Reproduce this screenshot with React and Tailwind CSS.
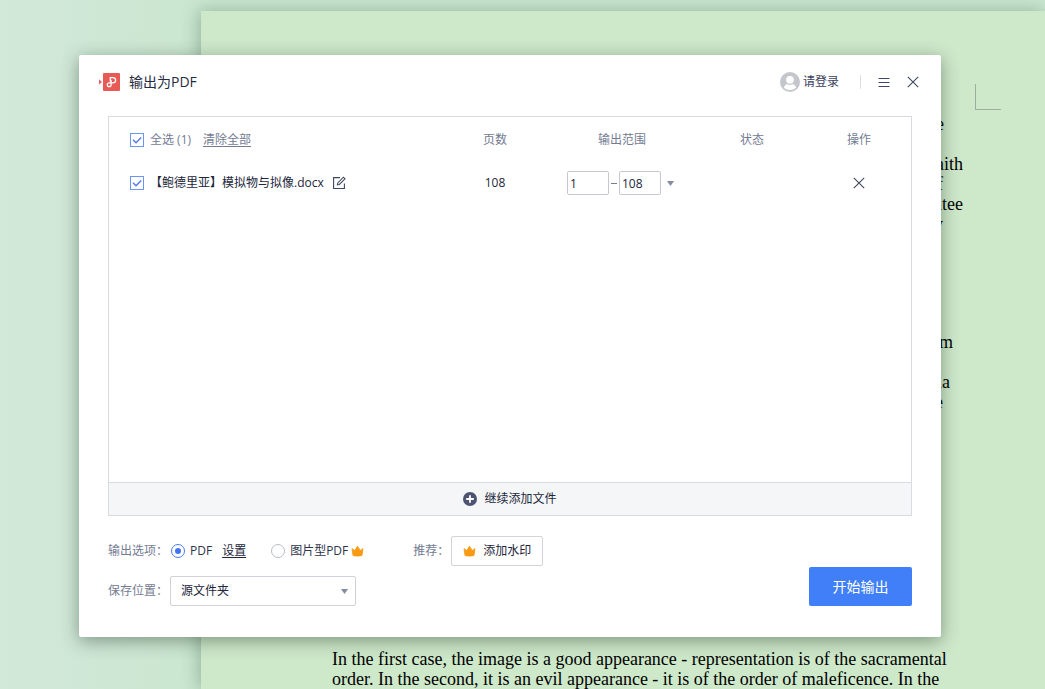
import { useState } from 'react';

const CROWN = 'M1 3.6 3.7 5.6 6.5 1.2 9.3 5.6 12 3.6 11 10.6Q6.5 11.6 2 10.6Z';

function CrownIcon() {
    return (
        <svg className="h-3 w-[13px] shrink-0" viewBox="0 0 13 12" aria-hidden="true">
            <path d={CROWN} fill="#fa9a14" stroke="#fa9a14" strokeWidth="0.8" strokeLinejoin="round" />
        </svg>
    );
}

function CloseIcon() {
    return (
        <svg className="size-3" viewBox="0 0 12 12" fill="none" stroke="#3f4760" strokeWidth="1.1" aria-hidden="true">
            <path d="M0.8 0.8 11.2 11.2M11.2 0.8 0.8 11.2" />
        </svg>
    );
}

function Caret() {
    return (
        <svg className="pointer-events-none h-[5px] w-[7px]" viewBox="0 0 7 5" aria-hidden="true">
            <path d="M0 0H7L3.5 5Z" fill="#858ba0" />
        </svg>
    );
}

function Checkbox({ id, label, checked, onChange }) {
    return (
        <span className="grid size-[14px] shrink-0 place-items-center">
            <input
                id={id}
                type="checkbox"
                aria-label={label}
                checked={checked}
                onChange={onChange}
                className="peer col-start-1 row-start-1 size-[14px] appearance-none border border-[#6d93f5] bg-white"
            />
            <svg
                className="pointer-events-none invisible col-start-1 row-start-1 size-[10px] peer-checked:visible"
                viewBox="0 0 10 10"
                fill="none"
                stroke="#5577ea"
                strokeWidth="1.4"
                aria-hidden="true"
            >
                <path d="M1 4.8 4 7.8 9.2 2.4" />
            </svg>
        </span>
    );
}

function Radio({ id, checked, onChange }) {
    return (
        <input
            id={id}
            type="radio"
            name="format"
            checked={checked}
            onChange={onChange}
            className="size-[14px] shrink-0 appearance-none rounded-full border border-[#b9bdc6] bg-white bg-clip-content p-[3px] checked:border-[#4c7cf0] checked:bg-[#4274ee]"
        />
    );
}

function DocumentPage() {
    return (
        <div className="ml-[201px] mt-[11px] grow bg-[#cee8ca] pl-[131px] pt-[73px] font-['Liberation_Serif',serif] text-lg/5 text-black shadow-[-2px_0_16px_rgba(50,90,60,0.35)]">
            <div className="ml-[643px] size-[26px] border-b border-l border-[#9bb09b]" />
            <div className="mt-1 w-[631px] text-right">
                <p className="pr-[19px]">e</p>
                <p className="h-5"></p>
                <p>faith</p>
                <p className="pr-[20px]">f</p>
                <p>guarantee</p>
                <p className="pr-[20px]">y</p>
            </div>
            <div className="mt-[98px] w-[631px] text-right">
                <p className="pr-[10px]">m</p>
                <p className="h-5"></p>
                <p className="pr-[13px]">ia</p>
                <p className="pr-[20px]">e</p>
            </div>
            <div className="mt-[237px] whitespace-nowrap">
                <p>In the first case, the image is a good appearance - representation is of the sacramental</p>
                <p>order. In the second, it is an evil appearance - it is of the order of maleficence. In the</p>
            </div>
        </div>
    );
}

function TitleBar() {
    return (
        <header className="mb-[7px] flex h-[54px] items-center pl-5 pr-[22px]">
            <svg className="h-[18px] w-[21px]" viewBox="0 0 21 18" aria-hidden="true">
                <path d="M0 6.2 3 9 0 11.8Z" fill="#e8636a" />
                <rect x="4" width="17" height="18" rx="1" fill="#e75a55" />
                <g fill="none" stroke="#fff" strokeWidth="1.3" strokeLinecap="round">
                    <path d="M11.3 8V4.6H14A2.6 2.6 0 0 1 14 9.8H10.2A1.9 1.9 0 1 0 12.1 11.7V7.4" />
                </g>
            </svg>
            <h1 className="ml-[9px] text-sm text-[#262b40]">输出为PDF</h1>
            <button type="button" className="ml-auto flex items-center gap-[3px] text-[#3a415c]">
                <svg className="size-5" viewBox="0 0 20 20" aria-hidden="true">
                    <circle cx="10" cy="10" r="10" fill="#c3c6cb" />
                    <circle cx="10" cy="7.8" r="3.9" fill="#fff" />
                    <path d="M3.8 15.8Q4.6 12.6 7.6 12.2Q10 13.6 12.4 12.2Q15.4 12.6 16.2 15.8Q13.6 18 10 18Q6.4 18 3.8 15.8Z" fill="#fff" />
                </svg>
                请登录
            </button>
            <span className="ml-[21px] h-[14px] w-px bg-[#dcdfe4]" />
            <button type="button" aria-label="菜单" className="ml-[17px]">
                <svg className="size-3" viewBox="0 0 12 12" stroke="#3f4760" strokeWidth="1" aria-hidden="true">
                    <path d="M0.5 2.5H11.5M0.5 6.5H11.5M0.5 10.5H11.5" />
                </svg>
            </button>
            <button type="button" aria-label="关闭" className="ml-[17px]">
                <CloseIcon />
            </button>
        </header>
    );
}

function FileTable({ checked, setChecked }) {
    const toggle = () => setChecked(!checked);

    return (
        <div className="mx-[29px] border border-[#d9dbe1]">
            <div className="min-h-[365px]">
                <table className="w-full table-fixed">
                    <thead className="text-[#747b92]">
                        <tr className="h-[45px]">
                            <th className="pl-[21px] font-normal">
                                <div className="flex items-center gap-[6px]">
                                    <Checkbox id="all" checked={checked} onChange={toggle} />
                                    <label htmlFor="all">全选 (1)</label>
                                    <button type="button" className="ml-[6px] underline underline-offset-2">清除全部</button>
                                </div>
                            </th>
                            <th className="w-[130px] font-normal">页数</th>
                            <th className="w-[124px] font-normal">输出范围</th>
                            <th className="w-[136px] font-normal">状态</th>
                            <th className="w-[91px] pr-[13px] font-normal">操作</th>
                        </tr>
                    </thead>
                    <tbody className="text-[#22263a]">
                        <tr className="h-[42px]">
                            <td className="pl-[21px]">
                                <div className="flex items-center gap-[6px]">
                                    <Checkbox id="file" checked={checked} onChange={toggle} />
                                    <label htmlFor="file" className="whitespace-nowrap">【鲍德里亚】模拟物与拟像.docx</label>
                                    <button type="button" aria-label="重命名" className="ml-[2px]">
                                        <svg className="size-[14px]" viewBox="0 0 14 14" fill="none" stroke="#3f4760" strokeWidth="1.1" aria-hidden="true">
                                            <path d="M8 1.6H1.6V12.5H12.4V7.4" />
                                            <path d="M5.4 8.9 5.8 6.9 11.4 1.2 13 2.8 7.4 8.5Z" />
                                        </svg>
                                    </button>
                                </div>
                            </td>
                            <td className="text-center">108</td>
                            <td>
                                <div className="flex items-center pl-[7px]">
                                    <input aria-label="起始页" defaultValue="1" className="h-6 w-[42px] shrink-0 rounded-xs border border-[#c6c8d0] px-[2px]" />
                                    <span className="mx-[2px] h-px w-[6px] shrink-0 bg-[#747b92]" />
                                    <input aria-label="结束页" defaultValue="108" className="h-6 w-[42px] shrink-0 rounded-xs border border-[#c6c8d0] px-[2px]" />
                                    <button type="button" aria-label="选择范围" className="ml-[6px]">
                                        <Caret />
                                    </button>
                                </div>
                            </td>
                            <td></td>
                            <td className="pr-[13px]">
                                <button type="button" aria-label="删除" className="mx-auto block">
                                    <CloseIcon />
                                </button>
                            </td>
                        </tr>
                    </tbody>
                </table>
            </div>
            <button type="button" className="flex h-[33px] w-full items-center justify-center gap-[7px] border-t border-[#d9dbe1] bg-[#f5f6f8] text-[#22263a]">
                <svg className="size-[14px]" viewBox="0 0 14 14" aria-hidden="true">
                    <circle cx="7" cy="7" r="7" fill="#4c5470" />
                    <path d="M7 3.2V10.8M3.2 7H10.8" stroke="#fff" strokeWidth="1.8" />
                </svg>
                继续添加文件
            </button>
        </div>
    );
}

function OutputOptions() {
    const [format, setFormat] = useState('pdf');

    return (
        <div className="mx-[29px] mb-[31px] mt-5 flex items-end justify-between text-[#2f354c]">
            <div className="flex flex-col gap-[10px]">
                <div className="flex h-[30px] items-center">
                    <span className="w-[63px] text-[#747b92]">输出选项：</span>
                    <Radio id="pdf" checked={format === 'pdf'} onChange={() => setFormat('pdf')} />
                    <label htmlFor="pdf" className="ml-[5px]">PDF</label>
                    <button type="button" className="ml-[10px] text-[#22263a] underline underline-offset-2">设置</button>
                    <span className="ml-[25px] flex items-center">
                        <Radio id="image-pdf" checked={format === 'image'} onChange={() => setFormat('image')} />
                        <label htmlFor="image-pdf" className="ml-[5px] mr-[3px]">图片型PDF</label>
                        <CrownIcon />
                    </span>
                    <span className="ml-[49px] text-[#747b92]">推荐：</span>
                    <button type="button" className="ml-[2px] flex h-[30px] items-center gap-[7px] rounded-xs border border-[#d2d4da] px-[11px] text-[#22263a]">
                        <CrownIcon />
                        添加水印
                    </button>
                </div>
                <div className="flex items-center">
                    <label htmlFor="folder" className="w-[62px] text-[#747b92]">保存位置：</label>
                    <div className="grid w-[186px] items-center">
                        <select id="folder" className="col-start-1 row-start-1 h-[30px] appearance-none rounded-xs border border-[#cfd2d9] bg-white px-[10px] text-[#22263a]">
                            <option>源文件夹</option>
                        </select>
                        <span className="pointer-events-none col-start-1 row-start-1 mr-2 justify-self-end">
                            <Caret />
                        </span>
                    </div>
                </div>
            </div>
            <button type="button" className="h-[39px] w-[103px] rounded-xs bg-[#417ff9] text-sm text-white">开始输出</button>
        </div>
    );
}

export default function App() {
    const [checked, setChecked] = useState(true);

    return (
        <div className="relative flex h-screen overflow-hidden bg-linear-to-r from-[#d2e8d9] from-0% to-[#cae6d0] to-20%">
            <DocumentPage />
            <main className="absolute left-[79px] right-[104px] top-[55px] rounded-xs bg-white font-['Open_Sans','Noto_Sans_CJK_SC',sans-serif] text-xs shadow-[0_4px_18px_rgba(30,50,35,0.45)]">
                <TitleBar />
                <FileTable checked={checked} setChecked={setChecked} />
                <OutputOptions />
            </main>
        </div>
    );
}
